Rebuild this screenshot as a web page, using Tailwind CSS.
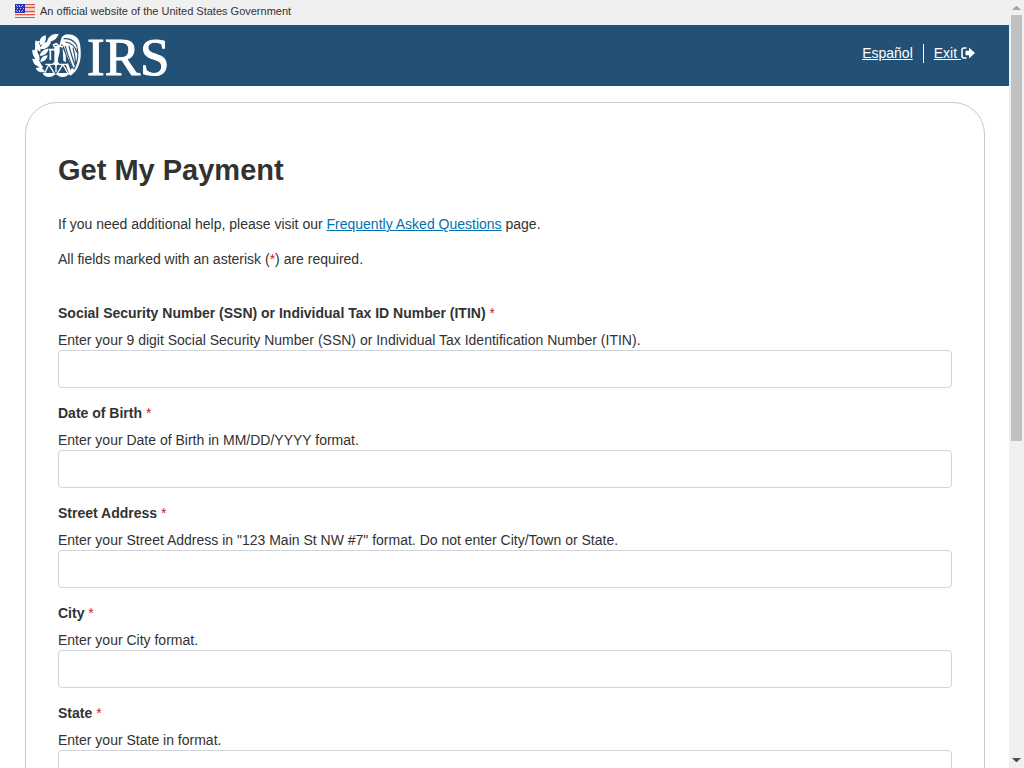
<!DOCTYPE html>
<html lang="en">
<head>
<meta charset="utf-8">
<meta name="viewport" content="width=device-width, initial-scale=1">
<title>Get My Payment</title>
<script src="https://cdn.jsdelivr.net/npm/@tailwindcss/browser@4"></script>
</head>
<body class="flex h-screen overflow-hidden bg-white font-['Liberation_Sans',Arial,sans-serif] text-sm text-[#323232]">
<div class="min-w-0 flex-1 overflow-hidden">
  <div class="flex h-[25px] items-start gap-[5px] bg-[#f0f0f0] px-[15px] pt-1">
    <svg class="h-[14px] w-5" viewBox="0 0 20 14" shape-rendering="crispEdges" role="img" aria-label="U.S. flag">
      <path fill="#f9c9c6" d="M0 0h20v14H0z"/>
      <path fill="#df5240" d="M0 0h20v1H0zM0 3h20v1H0zM0 7h20v1H0zM0 10h20v1H0zM0 13h20v1H0z"/>
      <path fill="#f4f0f0" d="M0 9h20v1H0zM0 12h20v1H0z"/>
      <path fill="#2a32b4" d="M0 0h10v9H0z"/>
      <path fill="#b9bdf0" d="M1 1h1v1h-1zM4 1h1v2h-1zM7 1h1v1h-1zM2 2h1v1h-1zM6 2h1v1h-1zM2 4h1v1h-1zM5 4h1v1h-1zM8 4h1v1h-1zM1 6h1v1h-1zM4 6h1v2h-1zM7 6h1v1h-1zM2 7h1v1h-1zM6 7h1v1h-1z"/>
    </svg>
    <span class="text-[11px] leading-[14px]">An official website of the United States Government</span>
  </div>
  <header class="flex h-[61px] items-start justify-between bg-[#235075] pr-[34px] pl-8 text-white">
    <a href="#" aria-label="IRS" class="flex items-start gap-[6px]">
      <svg class="mt-2 h-[46px] w-[49px]" viewBox="96 99 147 138" aria-hidden="true">
        <g fill="#fff">
          <path d="M176 102c-17-2-31 5-35 23 17 1 29-7 35-23zM137 106c-15 4-21 14-16 30 13-5 19-15 16-30zM153 125c-16-2-28 5-33 22 17 2 28-6 33-22zM107 121c-5 16 0 27 14 34 3-15-2-27-14-34zM146 146c-13 0-23 7-27 21 14 1 23-6 27-21zM97 149c-1 16 6 27 22 31 1-16-7-27-22-31zM143 166c-13 1-20 7-22 20 12-1 20-8 22-20zM97 176c2 15 11 24 28 25-3-16-13-25-28-25zM107 204c6 12 15 15 28 11-7-11-16-15-28-11z"/>
          <path d="M120 124c-12 26-10 53 9 77l-5 9c-24-25-28-58-10-88z"/>
          <path d="M183 119c1-9 8-15 19-16 22 0 34 10 38 29 4 25 3 49-4 64-5 15-14 25-25 31l-5-7 11-18-15-31-10-31-8-8-2 9-4-5z"/>
        </g>
        <g fill="none" stroke="#235075" stroke-width="3.500">
          <path d="M191 116c19-2 33 7 41 24M196 126c18 2 29 12 35 32M196 138c6 28 14 46 24 68M207 138c5 22 12 40 18 58M219 143c5 18 7 30 8 48M231 142c5 20 3 43-9 66"/>
        </g>
        <g fill="none" stroke="#fff" stroke-width="5">
          <path d="M163 141l-2-7 8-3 6 6 14 4M147 149h24v46M151 149v31"/>
          <path d="M136 193h22l10-5 10 5h26M146 194l-13 28h31l-17-28M188 194l-17 28h34l-16-28M168 190v27" stroke-width="4"/>
        </g>
        <path fill="#fff" d="M128 219h38c-3 8-9 12-19 12s-16-4-19-12zM169 219h38c-3 8-9 12-19 12s-16-4-19-12zM168 182l10 8-10 9-10-9zM163 138h16v18l-8 33h-8zM188 143l9 22 1 22-8-5zM204 190l10 27-6 6-11-29z"/>
      </svg>
      <span class="font-['Liberation_Serif','Times_New_Roman',serif] text-[53px] leading-[64px] [-webkit-text-stroke:1px_white]">IRS</span>
    </a>
    <nav class="mt-[18px] flex items-center leading-5">
      <a href="#" class="pr-[10px] underline">Español</a>
      <a href="#" class="flex h-[19px] items-center border-l border-white pl-[10px] underline"><span class="whitespace-pre">Exit </span>
        <svg class="h-[12px] w-[14px]" viewBox="0 0 14 12" aria-hidden="true"><path d="M5.500 1H3Q1 1 1 3v6q0 2 2 2h2.500" fill="none" stroke="#fff" stroke-width="1.600"/><path fill="#fff" d="M4.500 3.700H8V.6l6 5.400-6 5.400V8.300H4.500z"/></svg>
      </a>
    </nav>
  </header>
  <main class="mt-4 mr-6 ml-[25px] rounded-[32px] border border-[#c9c9c9] px-8 pt-[47px] pb-12">
    <h1 class="text-[29px] leading-10 font-bold">Get My Payment</h1>
    <p class="mt-6 leading-5">If you need additional help, please visit our <a href="#" class="text-[#0071b3] underline">Frequently Asked Questions</a> page.</p>
    <p class="mt-[15px] leading-5">All fields marked with an asterisk (<span class="text-[#cd2026]">*</span>) are required.</p>
    <form class="mt-[34px] grid gap-[15px] leading-5">
      <div class="flex flex-col">
        <label for="ssn" class="mb-[7px] font-bold">Social Security Number (SSN) or Individual Tax ID Number (ITIN) <span class="font-normal text-[#cd2026]">*</span></label>
        <span id="ssn-hint">Enter your 9 digit Social Security Number (SSN) or Individual Tax Identification Number (ITIN).</span>
        <input id="ssn" type="text" aria-describedby="ssn-hint" required class="h-[38px] w-full rounded border border-[#ced4da] bg-white px-3">
      </div>
      <div class="flex flex-col">
        <label for="dob" class="mb-[7px] font-bold">Date of Birth <span class="font-normal text-[#cd2026]">*</span></label>
        <span id="dob-hint">Enter your Date of Birth in MM/DD/YYYY format.</span>
        <input id="dob" type="text" aria-describedby="dob-hint" required class="h-[38px] w-full rounded border border-[#ced4da] bg-white px-3">
      </div>
      <div class="flex flex-col">
        <label for="street" class="mb-[7px] font-bold">Street Address <span class="font-normal text-[#cd2026]">*</span></label>
        <span id="street-hint">Enter your Street Address in "123 Main St NW #7" format. Do not enter City/Town or State.</span>
        <input id="street" type="text" aria-describedby="street-hint" required class="h-[38px] w-full rounded border border-[#ced4da] bg-white px-3">
      </div>
      <div class="flex flex-col">
        <label for="city" class="mb-[7px] font-bold">City <span class="font-normal text-[#cd2026]">*</span></label>
        <span id="city-hint">Enter your City format.</span>
        <input id="city" type="text" aria-describedby="city-hint" required class="h-[38px] w-full rounded border border-[#ced4da] bg-white px-3">
      </div>
      <div class="flex flex-col">
        <label for="state" class="mb-[7px] font-bold">State <span class="font-normal text-[#cd2026]">*</span></label>
        <span id="state-hint">Enter your State in format.</span>
        <input id="state" type="text" aria-describedby="state-hint" required class="h-[38px] w-full rounded border border-[#ced4da] bg-white px-3">
      </div>
    </form>
  </main>
</div>
<div class="flex w-[15px] shrink-0 flex-col items-center bg-[#f0f0f0]" aria-hidden="true">
  <svg class="h-[15px] w-[15px] shrink-0" viewBox="0 0 15 15"><path fill="#a3a3a3" d="M7 6h1l4 4H3z"/></svg>
  <div class="min-h-0 w-full flex-1 px-[2px]"><div class="h-[57.7%] bg-[#c1c1c1]"></div></div>
  <svg class="h-[15px] w-[15px] shrink-0" viewBox="0 0 15 15"><path fill="#505050" d="M3 5h9L8 9H7z"/></svg>
</div>
</body>
</html>
